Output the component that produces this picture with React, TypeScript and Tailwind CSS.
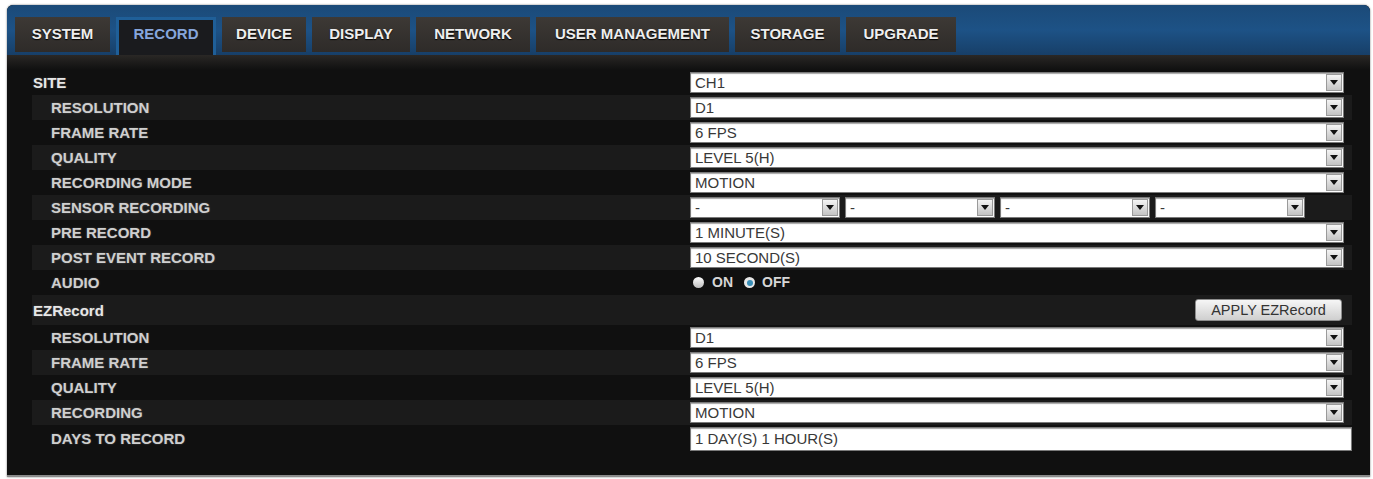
import React from 'react'

const tabs = [
  { label: 'SYSTEM', w: 'w-[95px]' },
  { label: 'RECORD', w: 'w-[100px]', active: true },
  { label: 'DEVICE', w: 'w-[84px]' },
  { label: 'DISPLAY', w: 'w-[98px]' },
  { label: 'NETWORK', w: 'w-[114px]' },
  { label: 'USER MANAGEMENT', w: 'w-[193px]' },
  { label: 'STORAGE', w: 'w-[105px]' },
  { label: 'UPGRADE', w: 'w-[110px]' },
]

const Arrow = () => (
  <span className="flex h-[17px] w-[16px] items-center justify-center border border-[#9a9a9a] bg-gradient-to-b from-[#f4f4f4] to-[#c4c4c4]">
    <svg width="8" height="5" viewBox="0 0 8 5">
      <path d="M0 0H8L4 5Z" fill="#111" />
    </svg>
  </span>
)

const Select = ({ value, w = 'w-[654px]' }: { value: string; w?: string }) => (
  <div className={`flex h-[21px] ${w} items-center justify-between border border-[#7a7a7a] bg-white pl-[4px] pr-[1px] shadow-[inset_0_1px_1px_rgba(0,0,0,0.35)]`}>
    <span className="text-[15px] leading-none text-[#383838]">{value}</span>
    <Arrow />
  </div>
)

const Row = ({
  label,
  striped,
  sub = true,
  h = 'h-[25px]',
  children,
}: {
  label: string
  striped?: boolean
  sub?: boolean
  h?: string
  children?: React.ReactNode
}) => (
  <div className={`grid ${h} grid-cols-[658px_1fr] items-center ${striped ? 'bg-[#1b1b1b]' : ''}`}>
    <span
      className={`${sub ? 'pl-[19px] text-[#cfcfcf]' : 'pl-[1px] text-[#e6e6e6]'} text-[15px] font-bold leading-none [text-shadow:0_0_2px_rgba(255,255,255,0.25)]`}
    >
      {label}
    </span>
    <div className="flex items-center">{children}</div>
  </div>
)

export default function App() {
  return (
    <div className="h-[479px] w-[1373px] bg-white pl-[7px] pt-[5px] font-['Liberation_Sans',Arial,sans-serif]">
      <div className="h-[472px] w-[1363px] overflow-hidden rounded-t-[6px] border-b-2 border-[#8a8a8a] bg-[#101010] shadow-[0_0_2px_rgba(0,0,0,0.6)]">
        <div className="flex h-[50px] gap-[6px] bg-gradient-to-b from-[#1b4a78] via-[#1d5286] to-[#173f68] pl-[8px] pt-[12px]">
          {tabs.map((t) =>
            t.active ? (
              <div
                key={t.label}
                className={`${t.w} flex h-[38px] items-center justify-center border-x-[3px] border-t-[3px] border-[#1f5f98] bg-[#1a1b1e] pb-[6px] text-[15px] font-bold text-[#86a6dc]`}
              >
                {t.label}
              </div>
            ) : (
              <div
                key={t.label}
                className={`${t.w} flex h-[35px] items-center justify-center bg-gradient-to-b from-[#3d3935] to-[#2e2b29] text-[15px] font-bold text-[#eeeeee] [text-shadow:0_1px_1px_#000]`}
              >
                {t.label}
              </div>
            ),
          )}
        </div>
        <div className="h-[15px] bg-gradient-to-b from-[#2a2826] to-[#101010]" />
        <div className="box-content w-[1320px] pl-[25px]">
          <Row label="SITE" sub={false}>
            <Select value="CH1" />
          </Row>
          <Row label="RESOLUTION" striped>
            <Select value="D1" />
          </Row>
          <Row label="FRAME RATE">
            <Select value="6 FPS" />
          </Row>
          <Row label="QUALITY" striped>
            <Select value="LEVEL 5(H)" />
          </Row>
          <Row label="RECORDING MODE">
            <Select value="MOTION" />
          </Row>
          <Row label="SENSOR RECORDING" striped>
            <div className="flex gap-[5px]">
              <Select value="-" w="w-[150px]" />
              <Select value="-" w="w-[150px]" />
              <Select value="-" w="w-[150px]" />
              <Select value="-" w="w-[150px]" />
            </div>
          </Row>
          <Row label="PRE RECORD">
            <Select value="1 MINUTE(S)" />
          </Row>
          <Row label="POST EVENT RECORD" striped>
            <Select value="10 SECOND(S)" />
          </Row>
          <Row label="AUDIO">
            <div className="flex items-center pl-[3px] text-[14px] font-bold text-[#d6d6d6]">
              <span className="h-[11px] w-[11px] rounded-full bg-gradient-to-b from-[#ffffff] to-[#bdbdbd]" />
              <span className="ml-[8px]">ON</span>
              <span className="ml-[11px] flex h-[11px] w-[11px] items-center justify-center rounded-full bg-[#e8e8e8]">
                <span className="h-[6px] w-[6px] rounded-full bg-[#3a8fb8]" />
              </span>
              <span className="ml-[7px]">OFF</span>
            </div>
          </Row>
          <Row label="EZRecord" sub={false} striped h="h-[30px]">
            <div className="flex w-full justify-end pr-[10px]">
              <button className="h-[22px] w-[147px] rounded-[3px] border border-[#8c8c8c] bg-gradient-to-b from-[#f6f6f6] to-[#cfcfcf] text-[14.5px] leading-none text-[#333]">
                APPLY EZRecord
              </button>
            </div>
          </Row>
          <Row label="RESOLUTION">
            <Select value="D1" />
          </Row>
          <Row label="FRAME RATE" striped>
            <Select value="6 FPS" />
          </Row>
          <Row label="QUALITY">
            <Select value="LEVEL 5(H)" />
          </Row>
          <Row label="RECORDING" striped>
            <Select value="MOTION" />
          </Row>
          <Row label="DAYS TO RECORD" h="h-[27px]">
            <div className="flex h-[24px] w-[662px] items-center border border-[#7a7a7a] bg-white pl-[4px] shadow-[inset_0_1px_1px_rgba(0,0,0,0.35)]">
              <span className="text-[15px] leading-none text-[#383838]">1 DAY(S) 1 HOUR(S)</span>
            </div>
          </Row>
        </div>
      </div>
    </div>
  )
}
